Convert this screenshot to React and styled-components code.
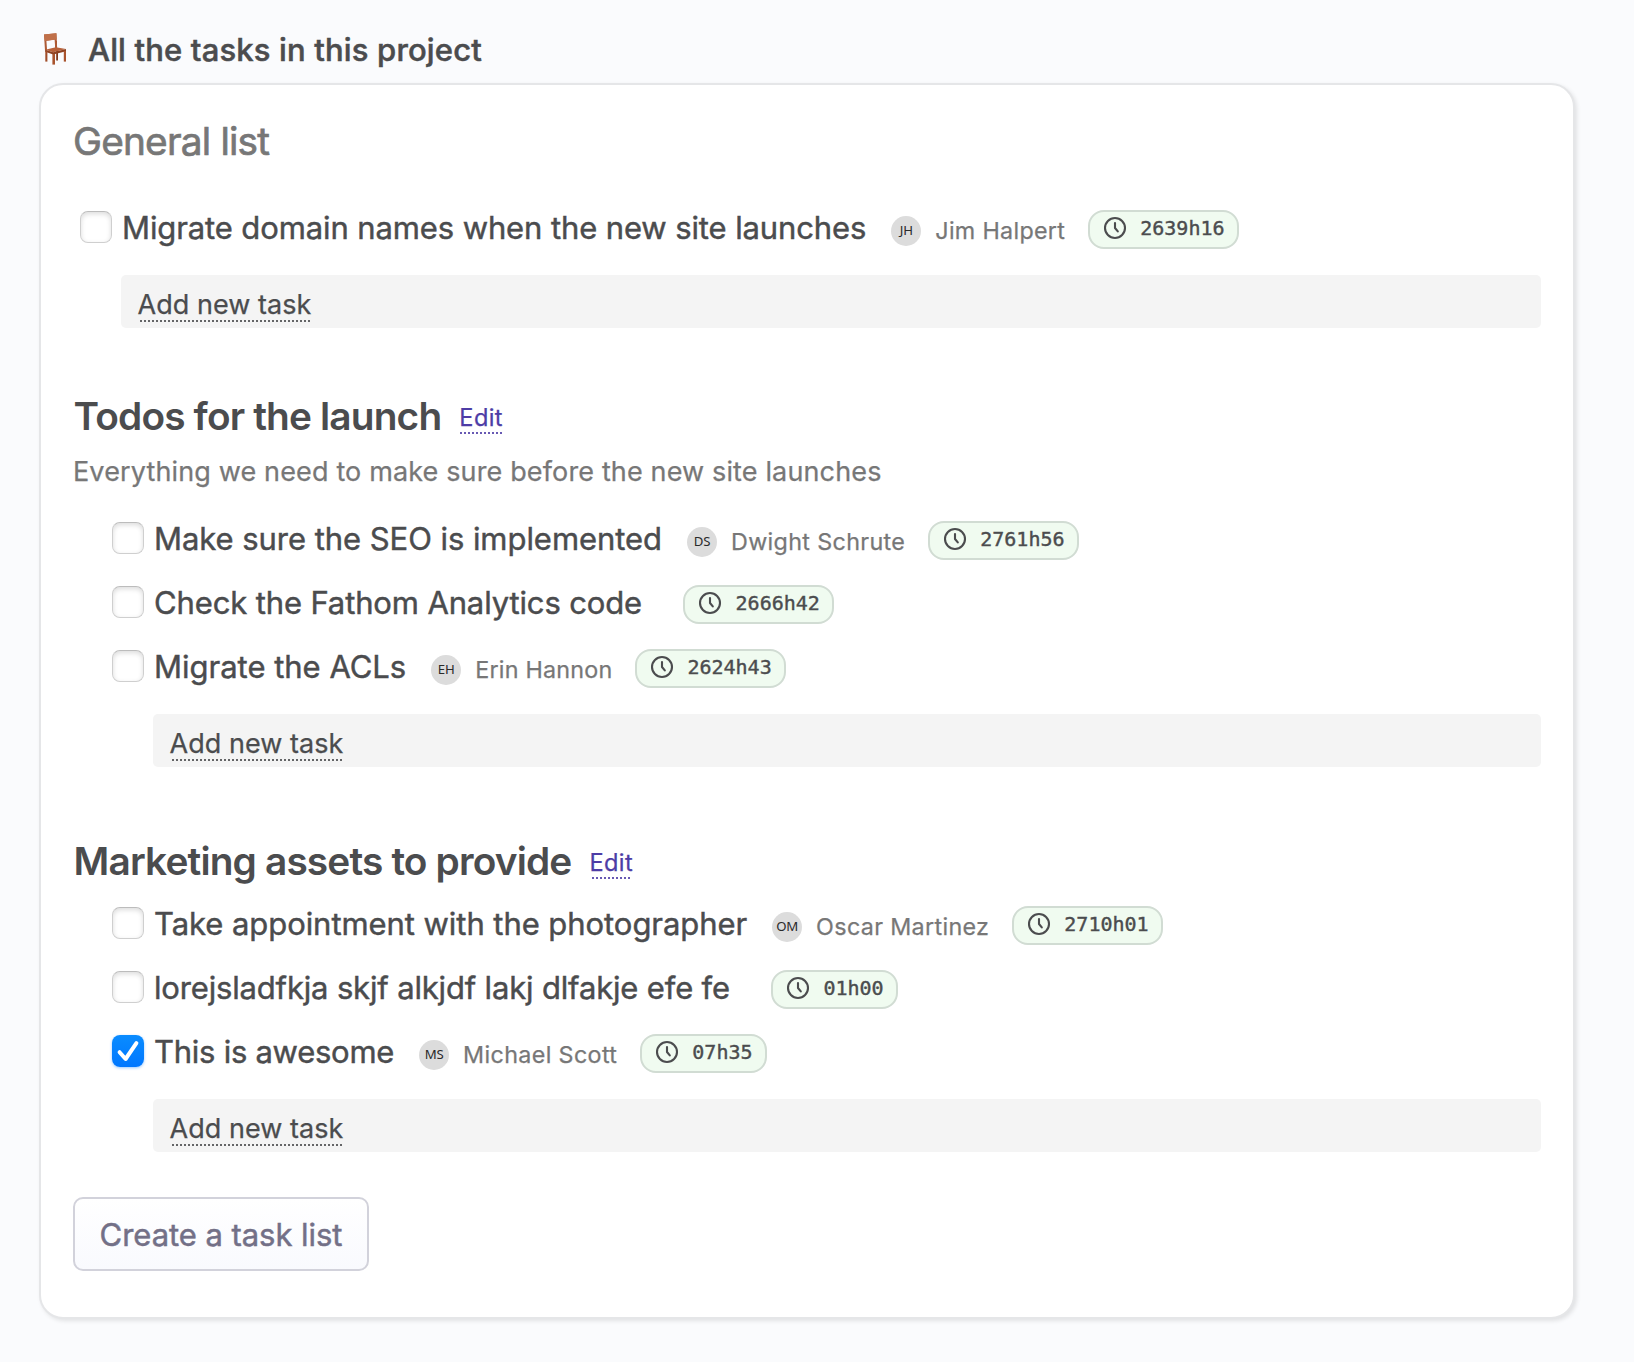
import React, { useState } from "react";
import styled, { createGlobalStyle } from "styled-components";

const GlobalStyle = createGlobalStyle`
  * { box-sizing: border-box; }
  body {
    margin: 0;
    background: #fafbfd;
    color: #4b4c4e;
    font-family: Inter, "Liberation Sans", sans-serif;
    -webkit-text-stroke: 0.25px currentColor;
  }
  h1, h2, p, ul { margin: 0; padding: 0; }
`;

const Page = styled.main`
  width: 1634px;
  min-height: 1362px;
  padding: 0 59px 43px 39px;
  overflow: hidden;
`;

const PageHeader = styled.header`
  display: flex;
  align-items: flex-start;
  height: 83px;
  padding: 30px 0 0 4px;
  gap: 21px;

  svg {
    flex: none;
    margin-top: 2px;
  }
`;

const PageTitle = styled.h1`
  font-size: 31px;
  font-weight: 500;
  line-height: 39px;
  letter-spacing: 0.16px;
  white-space: nowrap;
  -webkit-text-stroke-width: 0.5px;
`;

const Card = styled.section`
  height: 1236px;
  padding: 32px;
  background: #fff;
  border: 2px solid #e5e6e8;
  border-radius: 24px;
  box-shadow: 2px 2px 4px rgba(0, 0, 0, 0.1);
`;

const ListSection = styled.section`
  margin-top: ${(p) => p.$gap || 0}px;
`;

const ListHeader = styled.div`
  display: flex;
  height: 48px;
  margin-bottom: ${(p) => p.$after}px;
`;

const ListTitle = styled.h2`
  color: ${(p) => (p.$muted ? "#777" : "#4b4c4e")};
  font-size: 38.8px;
  font-weight: ${(p) => (p.$muted ? 400 : 600)};
  line-height: 48px;
  letter-spacing: ${(p) => (p.$muted ? -0.8 : -0.84)}px;
  -webkit-text-stroke-width: ${(p) => (p.$muted ? 0.7 : 0)}px;
  margin-left: ${(p) => (p.$muted ? 0 : 0.5)}px;
  white-space: nowrap;
`;

const Dotted = styled.a`
  display: block;
  color: ${(p) => p.$color || "inherit"};
  white-space: nowrap;
  cursor: pointer;

  &::after {
    content: "";
    display: block;
    height: 2px;
    margin: ${(p) => p.$drop || 0}px ${(p) => p.$inset ?? 2}px 0;
    opacity: 0.85;
    background: repeating-linear-gradient(
      90deg,
      currentColor 0 2px,
      transparent 2px 4px
    );
  }
`;

const EditLink = styled(Dotted)`
  height: 42px;
  margin-left: 18px;
  padding-top: 12px;
  font-size: 23.6px;
  line-height: 28px;
  letter-spacing: 0.4px;
`;

const Description = styled.p`
  margin: 12px 0 14px;
  color: #777;
  font-size: 27px;
  line-height: 40px;
  letter-spacing: 0.14px;
`;

const Tasks = styled.ul`
  list-style: none;
  padding-left: ${(p) => (p.$nested ? 39 : 7)}px;
`;

const TaskRow = styled.li`
  display: flex;
  align-items: flex-start;
  height: 64px;
`;

const Checkbox = styled.button`
  display: grid;
  place-items: center;
  flex: none;
  width: 32px;
  height: 32px;
  margin: 16px 10px 0 0;
  padding: 0;
  border: ${(p) => (p.$checked ? "0" : "1px solid #cfcfcf")};
  border-top-color: #bcbcbc;
  border-radius: 8px;
  background: ${(p) =>
    p.$checked ? "linear-gradient(#0a8cff, #0077ff)" : "#fff"};
  box-shadow: ${(p) =>
    p.$checked
      ? "0 1px 3px rgba(0, 122, 255, 0.4)"
      : "inset 0 2px 5px rgba(0, 0, 0, 0.14)"};
`;

const TaskLabel = styled.span`
  font-size: 31px;
  line-height: 65px;
  letter-spacing: ${(p) => p.$tracking}px;
  white-space: nowrap;
  -webkit-text-stroke-width: 0.45px;
`;

const Avatar = styled.span`
  flex: none;
  width: 30px;
  height: 30px;
  margin: 21px 14px 0 25px;
  border-radius: 50%;
  background: #dcdcdc;
  color: #2a2a2a;
  font: 13.2px/29px "Noto Sans", sans-serif;
  letter-spacing: -0.2px;
  text-align: center;
  -webkit-text-stroke-width: 0;
`;

const Assignee = styled.span`
  color: #777;
  font-size: 23.3px;
  line-height: 71px;
  letter-spacing: ${(p) => p.$tracking}px;
  white-space: nowrap;
`;

const Duration = styled.span`
  display: flex;
  flex: none;
  height: 39px;
  margin: 15px 0 0 ${(p) => (p.$alone ? 41 : 22.5)}px;
  padding: 0 12.5px 0 13px;
  border: 2px solid #d1dcd3;
  border-radius: 16px;
  background: #f0fbf0;

  svg {
    margin: 4px 13.5px 0 0;
  }
`;

const DurationText = styled.span`
  font: 20px/33px "DejaVu Sans Mono", monospace;
  -webkit-text-stroke-width: 0.4px;
`;

const AddTask = styled.div`
  height: 53px;
  margin: 16px 0 0 ${(p) => (p.$nested ? 80 : 48)}px;
  padding: 9px 17px 0;
  border-radius: 5px;
  background: #f4f4f4;
`;

const AddTaskLink = styled(Dotted)`
  width: 174px;
  padding-top: 3px;
  font-size: 27px;
  line-height: 36px;
  letter-spacing: 0.05px;
  text-indent: -0.5px;
`;

const CreateButton = styled.button`
  display: block;
  width: 296px;
  height: 74px;
  margin-top: 45px;
  padding: 0;
  border: 2px solid #d2d2db;
  border-radius: 10px;
  background: linear-gradient(#fff, #f9fafe);
  color: #737087;
  font: 400 31px Inter, sans-serif;
  letter-spacing: -0.05px;
  -webkit-text-stroke: 0.5px #737087;
`;

const ChairIcon = () => (
  <svg width="24" height="34" viewBox="0 0 24 34">
    <path d="M12.2 9L14 8.8V18L12.2 18Z" fill="#9b4c29" />
    <path d="M13.2 19H15V28.5H13.2Z" fill="#7d391d" />
    <path d="M1 2.4L13.4 1.2L14.2 17H12.3L11.6 7.6L3.4 8.7L4.1 18.5H2Z" fill="#ad5a35" />
    <path d="M1 2.4L13.4 1.2L13.7 7.4L1.8 8.9Z" fill="#c0704a" />
    <path d="M2.2 17.7L12.8 15.2L23 17L10.2 20.3Z" fill="#b7613a" />
    <path d="M2.2 17.7L10.2 20.3L23 17V19.3L10.2 22.6L2.2 19.8Z" fill="#8e4222" />
    <path d="M2.3 19H4.4V29.6H2.3Z" fill="#a04c28" />
    <path d="M9.4 22H12V32.6H9.4Z" fill="#a8532d" />
    <path d="M20.8 19H23V29.6H20.8Z" fill="#a8532d" />
  </svg>
);

const ClockIcon = () => (
  <svg width="24" height="24" viewBox="0 0 24 24" fill="none" stroke="#4b4c4e" strokeWidth="2.1">
    <circle cx="12" cy="12" r="10" />
    <path d="M12 7V12L14.8 15.4" strokeLinecap="round" strokeLinejoin="round" />
  </svg>
);

const CheckMark = () => (
  <svg width="32" height="32" viewBox="0 0 32 32" fill="none">
    <path
      d="M7.6 17.2L13.6 24L24.4 8.2"
      stroke="#fff"
      strokeWidth="4"
      strokeLinecap="round"
      strokeLinejoin="round"
    />
  </svg>
);

const lists = [
  {
    title: "General list",
    muted: true,
    gap: 0,
    after: 30,
    tasks: [
      { label: "Migrate domain names when the new site launches", tracking: -0.11, initials: "JH", name: "Jim Halpert", nameTracking: 0.31, time: "2639h16" },
    ],
  },
  {
    title: "Todos for the launch",
    description: "Everything we need to make sure before the new site launches",
    gap: 64,
    after: 0,
    tasks: [
      { label: "Make sure the SEO is implemented", tracking: -0.05, initials: "DS", name: "Dwight Schrute", nameTracking: 0.35, time: "2761h56" },
      { label: "Check the Fathom Analytics code", tracking: -0.13, time: "2666h42" },
      { label: "Migrate the ACLs", tracking: -0.01, initials: "EH", name: "Erin Hannon", nameTracking: 0.22, time: "2624h43" },
    ],
  },
  {
    title: "Marketing assets to provide",
    gap: 70,
    after: 6,
    tasks: [
      { label: "Take appointment with the photographer", tracking: -0.06, initials: "OM", name: "Oscar Martinez", nameTracking: 0.34, time: "2710h01" },
      { label: "lorejsladfkja skjf alkjdf lakj dlfakje efe fe", tracking: -0.165, time: "01h00" },
      { label: "This is awesome", tracking: -0.26, initials: "MS", name: "Michael Scott", nameTracking: 0.36, time: "07h35", done: true },
    ],
  },
];

function Task({ task }) {
  const [done, setDone] = useState(!!task.done);
  return (
    <TaskRow>
      <Checkbox
        type="button"
        role="checkbox"
        aria-checked={done}
        $checked={done}
        onClick={() => setDone(!done)}
      >
        {done && <CheckMark />}
      </Checkbox>
      <TaskLabel $tracking={task.tracking}>{task.label}</TaskLabel>
      {task.name && <Avatar>{task.initials}</Avatar>}
      {task.name && <Assignee $tracking={task.nameTracking}>{task.name}</Assignee>}
      <Duration $alone={!task.name}>
        <ClockIcon />
        <DurationText>{task.time}</DurationText>
      </Duration>
    </TaskRow>
  );
}

export default function App() {
  return (
    <Page>
      <GlobalStyle />
      <PageHeader>
        <ChairIcon />
        <PageTitle>All the tasks in this project</PageTitle>
      </PageHeader>
      <Card>
        {lists.map((list) => (
          <ListSection key={list.title} $gap={list.gap}>
            <ListHeader $after={list.after}>
              <ListTitle $muted={list.muted}>{list.title}</ListTitle>
              {!list.muted && (
                <EditLink $color="#4d3ca6" $inset={list.description ? 1 : 3}>
                  Edit
                </EditLink>
              )}
            </ListHeader>
            {list.description && <Description>{list.description}</Description>}
            <Tasks $nested={!list.muted}>
              {list.tasks.map((task) => (
                <Task key={task.label} task={task} />
              ))}
            </Tasks>
            <AddTask $nested={!list.muted}>
              <AddTaskLink $drop={-3}>Add new task</AddTaskLink>
            </AddTask>
          </ListSection>
        ))}
        <CreateButton type="button">Create a task list</CreateButton>
      </Card>
    </Page>
  );
}
